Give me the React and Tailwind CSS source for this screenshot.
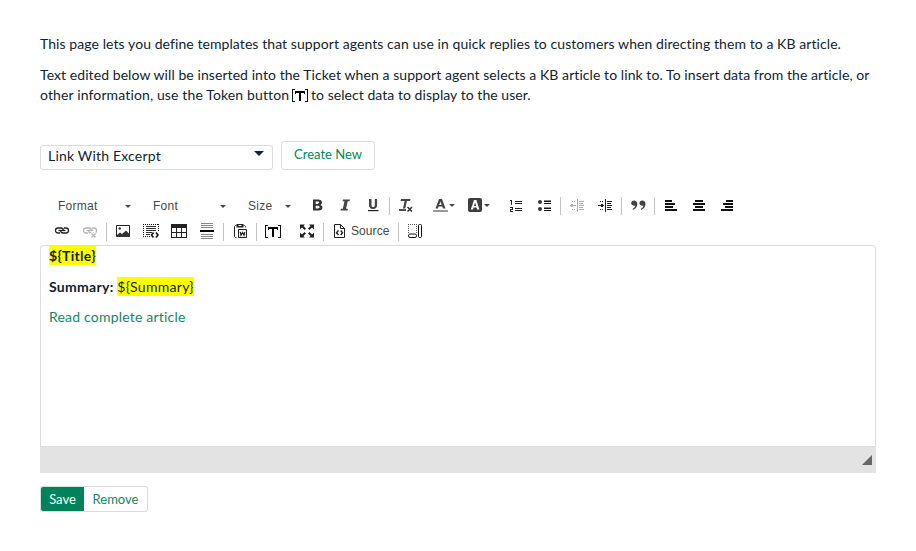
import React from "react";

function Icon({ children, w = 16, h = 16, crisp = true, className = "" }) {
  return (
    <svg
      width={w}
      height={h}
      viewBox={`0 0 ${w} ${h}`}
      fill="none"
      shapeRendering={crisp ? "crispEdges" : "auto"}
      className={"block shrink-0 " + className}
    >
      {children}
    </svg>
  );
}

const Tool = ({ children }) => (
  <div className="flex h-[18px] w-7 shrink-0 items-start justify-center">{children}</div>
);
const Sep = () => <div className="mx-0.5 h-[18px] w-px shrink-0 bg-[#c4c4c4]" />;
const Caret = ({ className = "" }) => (
  <Icon w={6} h={3} crisp={false} className={className}>
    <path d="M0 0h6L3 3z" fill="#474747" />
  </Icon>
);

function Combo({ label, className }) {
  return (
    <div className={"flex h-[18px] shrink-0 items-center justify-between pl-[10px] pr-3 " + className}>
      <span className="text-[12px] leading-[18px] tracking-[0.25px] text-[#484848]">{label}</span>
      <Caret />
    </div>
  );
}

function ColorTool({ children }) {
  return (
    <div className="flex h-[18px] w-[35px] shrink-0 items-start pl-[6px]">
      {children}
      <Caret className="mt-[7px]" />
    </div>
  );
}

const Bars = ({ rows }) => (
  <Icon>
    {rows.map(([x, w], i) => (
      <path key={i} d={`M${x} ${3 + i * 3}h${w}v2h-${w}z`} fill="#111" />
    ))}
  </Icon>
);

function Indent({ color, right }) {
  return (
    <Icon>
      <path
        d="M8 2h1v13H8zM10 4h5v1h-5zM10 6h4v1h-4zM10 8h5v1h-5zM10 10h4v1h-4zM10 12h5v1h-5zM3 4h1v1H3zM5 4h1v1H5zM3 12h1v1H3zM5 12h1v1H5z"
        fill={color}
      />
      <path d="M1 8h6v1H1z" fill={color} />
      <path d={right ? "M4 7h2v3H4z" : "M2 7h2v3H2z"} fill={color} />
    </Icon>
  );
}

function Chain({ color, broken }) {
  return (
    <Icon crisp={false}>
      <g stroke={color} strokeWidth="1.3">
        <path d="M6 10H4a2.500 2.500 0 0 1 0-5h3a2.500 2.500 0 0 1 2.400 2.500" />
        <path d="M10 5h2a2.500 2.500 0 0 1 0 5H9a2.500 2.500 0 0 1-2.400-2.500" />
        <path d="M4.500 7.500h7" />
        {broken && <path d="M9 10l5 5M14 10l-5 5" stroke="#fff" strokeWidth="3.500" />}
        {broken && <path d="M9.500 10.500l4 4M13.500 10.500l-4 4" />}
      </g>
    </Icon>
  );
}

const Token = ({ className = "" }) => (
  <Icon w={18} h={16} className={className}>
    <path d="M4 2H1v13h3v-1H2V3h2zM14 2h3v13h-3v-1h2V3h-2z" fill="#111" />
    <path d="M4 4h10v2h-4v8H8V6H4z" fill="#000" />
    <path d="M4 6h1v1H4zM13 6h1v1h-1z" fill="#000" />
  </Icon>
);

function ToolbarTop() {
  return (
    <div className="flex h-[18px]">
      <Combo label="Format" className="w-[95px]" />
      <Combo label="Font" className="w-[95px]" />
      <Combo label="Size" className="w-[65px]" />
      <Tool>
        <Icon crisp={false}>
          <path
            d="M4 2.500h5c2.500 0 4 1 4 3 0 1.200-.700 2-1.700 2.400 1.300.400 2.200 1.300 2.200 2.600 0 2-1.600 3-4 3H4zM6.700 4.600v2.300h1.900c1 0 1.600-.400 1.600-1.200s-.6-1.100-1.600-1.100zm0 4.200v2.600h2.200c1.200 0 1.700-.500 1.700-1.300s-.6-1.300-1.700-1.300z"
            fill="#333"
            fillRule="evenodd"
          />
        </Icon>
      </Tool>
      <Tool>
        <Icon crisp={false}>
          <path d="M6 2.500h7l-.400 1.800h-1.900L9 11.700h1.900l-.400 1.800h-7l.400-1.800h1.900l1.700-7.400H5.600z" fill="#444" />
        </Icon>
      </Tool>
      <Tool>
        <Icon crisp={false}>
          <path d="M4 2h2.500v5.800c0 1.600.5 2.300 1.700 2.300s1.600-.7 1.600-2.300V2h2.300v6c0 2.700-1.500 4-4 4S4 10.700 4 8z" fill="#444" />
          <path d="M3 13h10.500v1.200H3z" fill="#222" />
        </Icon>
      </Tool>
      <Sep />
      <Tool>
        <Icon crisp={false}>
          <path d="M3 2h9.500l-.5 2H8.900l-1.600 7.500H5L6.600 4H2.500z" fill="#444" />
          <path d="M1 12.200h7v1.600H1z" fill="#222" />
          <path d="M9.500 10l4.500 4.500M14 10l-4.500 4.500" stroke="#333" strokeWidth="1.500" />
        </Icon>
      </Tool>
      <div className="w-1.5 shrink-0" />
      <ColorTool>
        <Icon crisp={false} className="mr-px">
          <path d="M7 2h3l3.500 9.500H11l-.7-2H6.600l-.7 2H3.500zM8.500 4.500L7.200 8h2.500z" fill="#444" fillRule="evenodd" />
          <path d="M1 13h15v2H1z" fill="#999" />
        </Icon>
      </ColorTool>
      <ColorTool>
        <Icon crisp={false} className="mr-px">
          <rect x="1" y="1" width="14" height="14" rx="2" fill="#3d3d3d" />
          <path d="M7 3h2.400l3 9.500h-2.300l-.6-2H6.600L6 12.500H3.800zM8.100 5.500L7 9h2.200z" fill="#fff" fillRule="evenodd" />
        </Icon>
      </ColorTool>
      <div className="w-1.5 shrink-0" />
      <Tool>
        <Icon>
          <path
            d="M2 3h2v5H3V4H2zM2 10h3v3H3v1h2v1H2v-3h2v-1H2zM7 4h7v1H7zM7 6h7v1H7zM7 11h7v1H7zM7 13h7v1H7z"
            fill="#222"
          />
        </Icon>
      </Tool>
      <Tool>
        <Icon crisp={false}>
          <circle cx="4" cy="5" r="2" fill="#333" />
          <circle cx="4" cy="12" r="2" fill="#333" />
          <path d="M8 3.500h7V5H8zM8 6h7v1H8zM8 10.500h7V12H8zM8 13h7v1H8z" fill="#111" />
        </Icon>
      </Tool>
      <Sep />
      <Tool><Indent color="#b0b0b0" /></Tool>
      <Tool><Indent color="#222" right /></Tool>
      <Sep />
      <Tool>
        <Icon crisp={false}>
          <path
            d="M4.100 3.500c2 0 3.200 1.300 3.200 3.200 0 3-1.800 5.300-4.500 6.300v-1.300c1.500-.8 2.200-1.800 2.300-3-2.200.3-3.900-.8-3.900-2.500 0-1.500 1.200-2.700 2.900-2.700zM12.300 3.500c2 0 3.200 1.300 3.200 3.200 0 3-1.800 5.300-4.500 6.300v-1.300c1.500-.8 2.200-1.800 2.300-3-2.200.3-3.900-.8-3.900-2.500 0-1.500 1.200-2.700 2.900-2.700z"
            fill="#444"
          />
        </Icon>
      </Tool>
      <Sep />
      <Tool><Bars rows={[[2, 7], [2, 10], [2, 8], [2, 12]]} /></Tool>
      <Tool><Bars rows={[[4, 8], [2, 12], [4, 8], [2, 12]]} /></Tool>
      <Tool><Bars rows={[[7, 7], [4, 10], [6, 8], [2, 12]]} /></Tool>
    </div>
  );
}

function ToolbarBottom() {
  return (
    <div className="mt-2 flex h-[18px]">
      <Tool><Chain color="#222" /></Tool>
      <Tool><Chain color="#b5b5b5" broken /></Tool>
      <Sep />
      <Tool>
        <Icon crisp={false}>
          <path d="M1.500 2.500h13v11h-13z" fill="#fff" stroke="#222" />
          <path d="M2 12l3-2.500 2 1.500 4-3.500 3.500 3.500v3H2z" fill="#333" />
          <circle cx="4.700" cy="5.500" r="1.200" fill="#333" />
        </Icon>
      </Tool>
      <Tool>
        <Icon>
          <path d="M0 1.500h16M0 13.500h8" stroke="#111" strokeDasharray="1 1" />
          <path d="M.5 1v13M15.500 1v7" stroke="#111" strokeDasharray="1 1" />
          <path d="M3 3h10v1H3zM3 5h10v1H3zM3 7h10v1H3zM3 9h6v1H3zM3 11h4v1H3z" fill="#333" />
          <path d="M10.500 9.500L8.500 12l2 2.500M13 9.500l2 2.500-2 2.500" stroke="#111" strokeWidth="1.600" shapeRendering="auto" />
        </Icon>
      </Tool>
      <Tool>
        <Icon>
          <path d="M0 1h16v14H0zM1 5v4h4V5zM6 5v4h4V5zM11 5v4h4V5zM1 10v4h4v-4zM6 10v4h4v-4zM11 10v4h4v-4z" fill="#222" fillRule="evenodd" />
        </Icon>
      </Tool>
      <Tool>
        <Icon>
          <path d="M2 0h12v1H2zM2 2h12v1H2zM2 4h12v1H2zM2 11h12v1H2zM2 13h12v1H2zM2 15h12v1H2z" fill="#888" />
          <path d="M1 7h14v2H1z" fill="#000" />
        </Icon>
      </Tool>
      <Sep />
      <Tool>
        <Icon crisp={false}>
          <path d="M4.500 14.500h-1l-1-1v-10l1-1h1M11.500 2.500h1l1 1v1" stroke="#222" />
          <path d="M4.500 1h7v3.500h-7z" fill="#222" />
          <path d="M6.500 2h3v1h-3z" fill="#fff" />
          <path d="M6.500 6.500h8v8h-8z" fill="#fff" stroke="#222" />
          <path d="M8.200 9l.8 3.300 1.500-2.800 1.500 2.800.8-3.300" stroke="#222" strokeWidth="1.200" />
        </Icon>
      </Tool>
      <Sep />
      <Tool><Token /></Tool>
      <div className="w-1.5 shrink-0" />
      <Tool>
        <Icon crisp={false}>
          <path d="M1 1.500h5L4.500 3 7 5.500 5.500 7 3 4.500l-2 2zM15 1.500h-5L11.500 3 9 5.500 10.500 7 13 4.500l2 2zM1 14.500h5L4.500 13 7 10.500 5.500 9 3 11.500l-2-2zM15 14.500h-5l1.500-1.500L9 10.500 10.500 9l2.500 2.500 2-2z" fill="#222" />
        </Icon>
      </Tool>
      <Sep />
      <div className="flex w-[70px] shrink-0 items-start pl-[5px]">
        <Icon crisp={false}>
          <path d="M9.500 1.500h-6v13h10v-9zM9.500 1.500v4h4" stroke="#222" />
          <path d="M7.500 7.500L5.500 9.800l2 2.200M9.700 7.500l1.800 2.300L9.700 12" stroke="#222" strokeWidth="1.400" />
        </Icon>
        <span className="ml-1 text-[12px] leading-4 tracking-[0.08px] text-[#484848]">Source</span>
      </div>
      <Sep />
      <Tool>
        <Icon>
          <path d="M1 1.500h9M1.500 1v9M9.500 1v9" stroke="#555" strokeDasharray="1 1" />
          <rect x="1.500" y="11" width="8" height="3.500" rx="1.500" stroke="#111" shapeRendering="auto" />
          <rect x="11.500" y="1.500" width="3" height="13" rx="1" stroke="#111" shapeRendering="auto" />
        </Icon>
      </Tool>
    </div>
  );
}

export default function App() {
  return (
    <main className="h-[551px] w-[916px] overflow-hidden bg-white px-10 pt-[34px] font-['Lato',sans-serif] text-[14px] leading-5 text-[#10242f]">
      <p className="whitespace-nowrap tracking-[0.077px]">
        This page lets you define templates that support agents can use in quick replies to customers when directing
        them to a KB article.
      </p>
      <div className="mt-[11px] whitespace-nowrap tracking-[0.074px]">
        <p>Text edited below will be inserted into the Ticket when a support agent selects a KB article to link to. To insert data from the article, or</p>
        <p className="flex">
          <span className="w-[249px] tracking-[0.13px]">other information, use the Token button</span>
          <Token className="ml-0.5 mt-[2px]" />
          <span className="ml-0.5 tracking-[0.05px]">to select data to display to the user.</span>
        </p>
      </div>

      <div className="mt-9 flex items-end gap-2">
        <div className="flex h-[25px] w-[233px] items-start justify-between rounded-[3px] border border-[#dadddc] pl-[7px] pr-2">
          <span className="tracking-[0.19px]">Link With Excerpt</span>
          <Icon w={10} h={5} crisp={false} className="mt-[5px]">
            <path d="M0 0h10L5 5z" fill="#10242f" />
          </Icon>
        </div>
        <button className="h-[29px] w-[94px] rounded-[3px] border border-[#dadddc] pb-[3px] text-[13px] leading-5 text-[#00875a]">Create New</button>
      </div>

      <div className="mt-[27px] pl-2 font-['Liberation_Sans',Arial,sans-serif]">
        <ToolbarTop />
        <ToolbarBottom />
      </div>

      <section className="mt-1 h-[228px] w-[836px]">
        <div className="h-[202px] rounded-t-[3px] border border-[#dadddc] pl-2">
          <p className="leading-5"><strong className="bg-[#ffff00] py-px tracking-[0.3px]">{"${Title}"}</strong></p>
          <p className="mt-[11px] leading-5">
            <strong className="tracking-[0.3px]">Summary:</strong> <span className="bg-[#ffff00] py-px tracking-[0.3px]">{"${Summary}"}</span>
          </p>
          <p className="mt-[10px] leading-5 tracking-[0.2px] text-[#17855f]">Read complete article</p>
        </div>
        <div className="flex h-[26px] items-start justify-end bg-[#e3e3e3] pr-1 pt-2">
          <Icon w={10} h={10} crisp={false}>
            <path d="M10 0v10H0z" fill="#666" />
          </Icon>
        </div>
      </section>

      <div className="mt-[13px] flex h-[26px] text-[13px]">
        <button className="w-11 rounded-l-[3px] border border-r-0 border-[#cfe3da] bg-[#00835a] text-white">Save</button>
        <button className="w-16 rounded-r-[3px] border border-l-0 border-[#dadddc] text-[#17855f]">Remove</button>
      </div>
    </main>
  );
}
